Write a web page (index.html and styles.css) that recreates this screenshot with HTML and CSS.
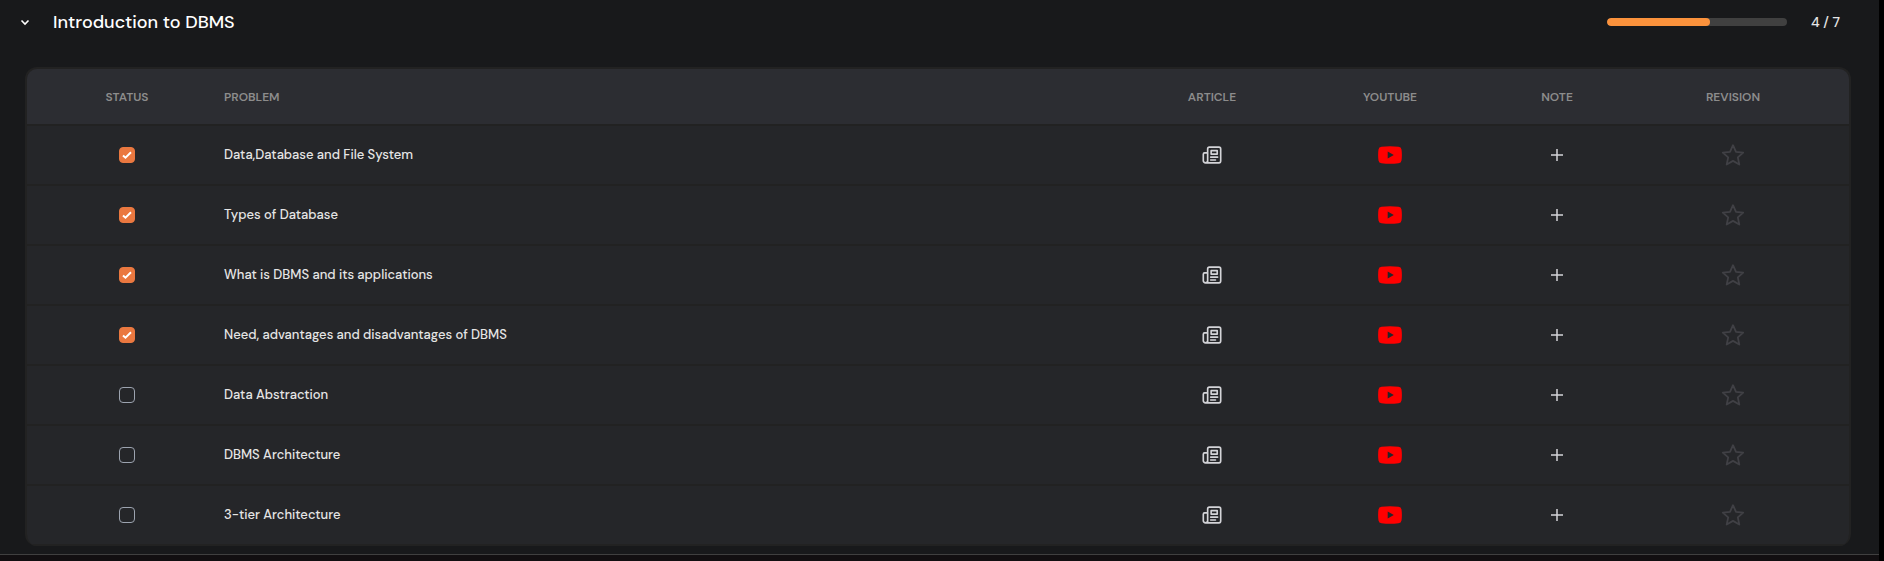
FILE: index.html
```
<!DOCTYPE html>
<html lang="en">
<head>
<meta charset="utf-8">
<title>Introduction to DBMS</title>
<link rel="stylesheet" href="styles.css">
</head>
<body>
<svg class="sprite" aria-hidden="true">
  <symbol id="article" viewBox="0.5 0.5 23 23"><path d="M7 20V5a2 2 0 0 1 2-2h11a2 2 0 0 1 2 2v14a2 2 0 0 1-2 2H4.500a2.500 2.500 0 0 1-2.500-2.500V11a1.500 1.500 0 0 1 1.500-1.500H7M7 18.500A2.500 2.500 0 0 1 4.500 21M11 7h7v4h-7zM10.500 14.500h8M10.500 17.800h5.500" fill="none" stroke="currentColor" stroke-width="1.900" stroke-linecap="round" stroke-linejoin="round"/></symbol>
  <symbol id="youtube" viewBox="0 0 24 18"><path fill="#f00" fill-rule="evenodd" d="M3.500.7Q12-.3 20.500.7Q23.200 1 23.500 3.500Q24.300 9 23.500 14.500Q23.200 17 20.500 17.300Q12 18.300 3.500 17.300Q.8 17 .5 14.500Q-.3 9 .5 3.500Q.8 1 3.500.7zM9.700 5.400V12.600L15.800 9z"/></symbol>
  <symbol id="plus" viewBox="0 0 12 12"><path d="M6 0v12M0 6h12" fill="none" stroke="currentColor" stroke-width="1.500"/></symbol>
  <symbol id="star" viewBox="0 0 24 24"><path d="M12 2.200l3 6.600 7.200.8-5.400 4.800 1.500 7.100L12 17.900l-6.300 3.600 1.500-7.100L1.800 9.600 9 8.800z" fill="none" stroke="currentColor" stroke-width="1.800" stroke-linejoin="round"/></symbol>
</svg>
<main class="section">
  <header class="section-head">
    <button class="toggle" aria-label="Collapse section"><svg viewBox="0 0 10 7"><path d="M1.500 1.500l3.500 3.500 3.500-3.500"/></svg></button>
    <h2 class="title">Introduction to DBMS</h2>
    <div class="bar" role="progressbar" aria-label="Progress" aria-valuenow="4" aria-valuemax="7"><div class="fill" style="width:57%"></div></div>
    <span class="count">4 / 7</span>
  </header>
  <div class="card">
    <table class="problems">
      <thead><tr><th class="status">Status</th><th class="problem">Problem</th><th class="article">Article</th><th class="youtube">YouTube</th><th class="note">Note</th><th class="revision">Revision</th></tr></thead>
      <tbody>
        <tr><td class="status"><input class="check" type="checkbox" id="p1" checked></td><td class="problem"><label for="p1">Data,Database and File System</label></td><td><a class="icon" href="#" aria-label="Article"><svg class="i-article"><use href="#article"/></svg></a></td><td><a class="icon" href="#" aria-label="YouTube"><svg class="i-youtube"><use href="#youtube"/></svg></a></td><td><button class="icon" aria-label="Add note"><svg class="i-plus"><use href="#plus"/></svg></button></td><td><button class="icon" aria-label="Mark for revision"><svg class="i-star"><use href="#star"/></svg></button></td></tr>
        <tr><td class="status"><input class="check" type="checkbox" id="p2" checked></td><td class="problem"><label for="p2">Types of Database</label></td><td></td><td><a class="icon" href="#" aria-label="YouTube"><svg class="i-youtube"><use href="#youtube"/></svg></a></td><td><button class="icon" aria-label="Add note"><svg class="i-plus"><use href="#plus"/></svg></button></td><td><button class="icon" aria-label="Mark for revision"><svg class="i-star"><use href="#star"/></svg></button></td></tr>
        <tr><td class="status"><input class="check" type="checkbox" id="p3" checked></td><td class="problem"><label for="p3">What is DBMS and its applications</label></td><td><a class="icon" href="#" aria-label="Article"><svg class="i-article"><use href="#article"/></svg></a></td><td><a class="icon" href="#" aria-label="YouTube"><svg class="i-youtube"><use href="#youtube"/></svg></a></td><td><button class="icon" aria-label="Add note"><svg class="i-plus"><use href="#plus"/></svg></button></td><td><button class="icon" aria-label="Mark for revision"><svg class="i-star"><use href="#star"/></svg></button></td></tr>
        <tr><td class="status"><input class="check" type="checkbox" id="p4" checked></td><td class="problem"><label for="p4">Need, advantages and disadvantages of DBMS</label></td><td><a class="icon" href="#" aria-label="Article"><svg class="i-article"><use href="#article"/></svg></a></td><td><a class="icon" href="#" aria-label="YouTube"><svg class="i-youtube"><use href="#youtube"/></svg></a></td><td><button class="icon" aria-label="Add note"><svg class="i-plus"><use href="#plus"/></svg></button></td><td><button class="icon" aria-label="Mark for revision"><svg class="i-star"><use href="#star"/></svg></button></td></tr>
        <tr><td class="status"><input class="check" type="checkbox" id="p5"></td><td class="problem"><label for="p5">Data Abstraction</label></td><td><a class="icon" href="#" aria-label="Article"><svg class="i-article"><use href="#article"/></svg></a></td><td><a class="icon" href="#" aria-label="YouTube"><svg class="i-youtube"><use href="#youtube"/></svg></a></td><td><button class="icon" aria-label="Add note"><svg class="i-plus"><use href="#plus"/></svg></button></td><td><button class="icon" aria-label="Mark for revision"><svg class="i-star"><use href="#star"/></svg></button></td></tr>
        <tr><td class="status"><input class="check" type="checkbox" id="p6"></td><td class="problem"><label for="p6">DBMS Architecture</label></td><td><a class="icon" href="#" aria-label="Article"><svg class="i-article"><use href="#article"/></svg></a></td><td><a class="icon" href="#" aria-label="YouTube"><svg class="i-youtube"><use href="#youtube"/></svg></a></td><td><button class="icon" aria-label="Add note"><svg class="i-plus"><use href="#plus"/></svg></button></td><td><button class="icon" aria-label="Mark for revision"><svg class="i-star"><use href="#star"/></svg></button></td></tr>
        <tr><td class="status"><input class="check" type="checkbox" id="p7"></td><td class="problem"><label for="p7">3-tier Architecture</label></td><td><a class="icon" href="#" aria-label="Article"><svg class="i-article"><use href="#article"/></svg></a></td><td><a class="icon" href="#" aria-label="YouTube"><svg class="i-youtube"><use href="#youtube"/></svg></a></td><td><button class="icon" aria-label="Add note"><svg class="i-plus"><use href="#plus"/></svg></button></td><td><button class="icon" aria-label="Mark for revision"><svg class="i-star"><use href="#star"/></svg></button></td></tr>
      </tbody>
    </table>
  </div>
</main>
</body>
</html>
```
FILE: styles.css
```
* { box-sizing: border-box; }
html { background: #120f11; }
body {
  margin: 0;
  min-height: 100vh;
  border-right: 5px solid #000;
  color: #e5e5e5;
  font-family: "DM Sans", Inter, "Open Sans", sans-serif;
  font-size: 13px;
  font-weight: 500;
}
.sprite { display: none; }
.section {
  padding: 8px 28px 8px 25px;
  background: #18191b;
  border-bottom: 1px solid #404040;
}
.section-head {
  display: flex;
  align-items: center;
  height: 28px;
  margin-bottom: 31px;
  padding-right: 11px;
}
.toggle, .icon {
  display: inline-flex;
  align-items: center;
  justify-content: center;
  padding: 0;
  border: 0;
  background: none;
  color: #d4d4d8;
  cursor: pointer;
}
.toggle { width: 12px; height: 24px; margin: 0 22px 0 -6px; }
.toggle svg { width: 10px; height: 7px; fill: none; stroke: #fff; stroke-width: 1.6; }
.title {
  flex: 1;
  margin: 0;
  color: #fff;
  font-size: 18px;
  font-weight: 500;
  line-height: 28px;
}
.bar {
  width: 180px;
  height: 8px;
  margin-right: 21px;
  border-radius: 4px;
  background: #404040;
  overflow: hidden;
}
.fill { height: 100%; border-radius: 4px; background: #fb923c; }
.count { width: 32px; font-size: 14px; text-align: right; white-space: nowrap; }
.card {
  border: 2px solid #222;
  border-bottom: 0;
  border-radius: 12px;
  background: #252629;
  overflow: hidden;
}
.problems { width: 100%; table-layout: fixed; border-collapse: separate; border-spacing: 0; }
th, td {
  padding: 0;
  border-bottom: 2px solid #222;
  text-align: center;
  vertical-align: middle;
}
th {
  height: 57px;
  background: #2c2d32;
  color: #8c8c8c;
  font-size: 12px;
  font-weight: 600;
  text-transform: uppercase;
}
td { height: 60px; line-height: 20px; }
.status { width: 197px; padding-left: 3px; }
.problem { text-align: left; }
.article { width: 142px; }
.youtube { width: 214px; }
.note { width: 120px; }
.revision { width: 232px; }
.icon { height: 24px; vertical-align: middle; }
.i-article { width: 20px; height: 20px; }
.i-youtube { width: 24px; height: 18px; }
.i-plus { width: 12px; height: 12px; color: #d4d4d8; }
.i-star { width: 24px; height: 24px; color: #404045; }
.check {
  appearance: none;
  display: block;
  width: 16px;
  height: 16px;
  margin: 0 auto;
  border: 1px solid #9ca3af;
  border-radius: 4px;
}
.check:checked {
  border-color: #ea7840;
  background: #ea7840 url("data:image/svg+xml,%3Csvg xmlns='http://www.w3.org/2000/svg' viewBox='0 0 16 16'%3E%3Cpath d='M4 8.500l2.500 2.200L12 5.300' fill='none' stroke='white' stroke-width='2'/%3E%3C/svg%3E") center / 16px 16px no-repeat;
}
```
